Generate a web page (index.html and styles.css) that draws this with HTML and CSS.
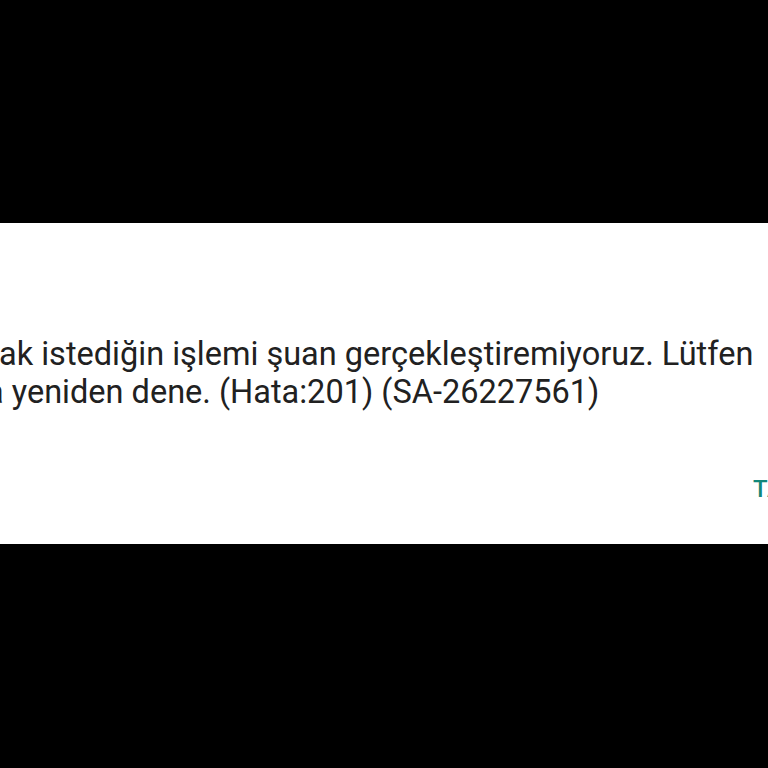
FILE: index.html
```html
<!DOCTYPE html>
<html lang="tr">
<head>
<meta charset="utf-8">
<link rel="stylesheet" href="styles.css">
</head>
<body>
<div class="screen">
  <div class="dialog">
    <div class="message">
      <div class="line line-1">ak istediğin işlemi şuan gerçekleştiremiyoruz. Lütfen</div>
      <div class="line line-2">a yeniden dene. (Hata:201) (SA-26227561)</div>
    </div>
    <div class="actions">
      <span class="button">TAMAM</span>
    </div>
  </div>
</div>
</body>
</html>
```
FILE: styles.css
```css
html, body {
  margin: 0;
  padding: 0;
  background: #000;
  width: 768px;
  height: 768px;
  overflow: hidden;
}
.screen {
  width: 768px;
  height: 768px;
  display: flex;
  flex-direction: column;
  padding-top: 223px;
  box-sizing: border-box;
}
.dialog {
  background: #fff;
  height: 321px;
  overflow: hidden;
  box-sizing: border-box;
  padding-top: 112px;
  font-family: Roboto, "Noto Sans", sans-serif;
}
.message {
  color: #212121;
  font-size: 32.5px;
  line-height: 38px;
}
.line {
  white-space: nowrap;
}
.line-1 {
  margin-left: -1px;
}
.line-2 {
  margin-left: -14px;
}
.actions {
  margin-top: 64px;
  padding-left: 753px;
  white-space: nowrap;
}
.button {
  color: #12877a;
  font-weight: 500;
  font-size: 24px;
  line-height: 28px;
  letter-spacing: 0.5px;
}
```
